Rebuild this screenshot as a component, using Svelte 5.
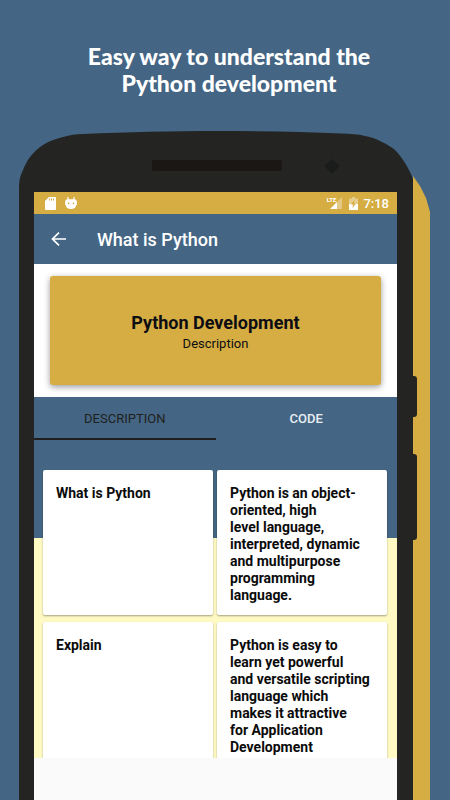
<script lang="ts">
	interface Lesson {
		id: number;
		title: string;
		body: string;
	}

	const tabs = ['Description', 'Code'];

	const lessons: Lesson[] = [
		{
			id: 1,
			title: 'What is Python',
			body: 'Python is an object-\noriented, high\nlevel language,\ninterpreted, dynamic\nand multipurpose\nprogramming\nlanguage.'
		},
		{
			id: 2,
			title: 'Explain',
			body: 'Python is easy to\nlearn yet powerful\nand versatile scripting\nlanguage which\nmakes it attractive\nfor Application\nDevelopment'
		}
	];

	let active = $state('Description');
</script>

<main class="page">
	<h1>Easy way to understand the<br />Python development</h1>

	<div class="phone">
		<div class="cast"></div>
		<span class="key key--power"></span>
		<span class="key key--volume"></span>

		<svg class="head" viewBox="0 0 394 61" preserveAspectRatio="none" aria-hidden="true">
			<path
				d="M0 61V56C0 50 1 45 4 39C6 34 8 30 11 26C15 21 19 17 24 14C30 10 37 8 44 6C51 4 57 3 64 3C110 1 150 0 200 0C245 0 285 1 323 2.5C331 3 339 3 346 5C352 6 358 8 363 11C368 13 372 16 376 19C380 23 383 27 386 32C389 37 392 42 394 48V61Z"
				fill="#242423"
			/>
			<rect x="133" y="29" width="130" height="11" rx="2" fill="#1b1714" />
			<path d="M313 28l8 7l-8 8l-8-8z" fill="#191c1a" />
		</svg>

		<div class="screen">
			<div class="status">
				<svg width="11" height="13" viewBox="0 0 11 13" aria-hidden="true">
					<path
						d="M4 0h6q1 0 1 1v11q0 1-1 1H1q-1 0-1-1V4zM4 1.4v2h1v-2zM6 1.4v2h1v-2zM8 1.4v2h1v-2z"
						fill="#fff"
						fill-rule="evenodd"
					/>
				</svg>
				<svg class="status__bot" width="12" height="13" viewBox="0 0 12 13" aria-hidden="true">
					<path d="M2.6 0L3.6 3M9.4 0L8.4 3" stroke="#fff" stroke-width="1.1" />
					<path d="M1 3.2q0-1 1-1h8q1 0 1 1v5q0 3.8-5 3.8T1 8.2z" fill="#fff" />
					<path d="M0.6 3.5v4.5M11.4 3.5v4.5" stroke="#fff" />
					<circle cx="3.6" cy="6.4" r="0.8" fill="#d5ad42" />
					<circle cx="8.4" cy="6.4" r="0.8" fill="#d5ad42" />
				</svg>
				<span class="status__signal">
					<span class="status__lte">LTE</span>
					<svg width="12" height="12" viewBox="0 0 12 12" aria-hidden="true">
						<path d="M12 0v12H7V5z" fill="#fff" opacity="0.35" />
						<path d="M7 5v7H0z" fill="#fff" />
					</svg>
				</span>
				<svg class="status__battery" width="9" height="13" viewBox="0 0 9 13" aria-hidden="true">
					<path d="M3 0h3v1.5h3V7H0V1.5h3z" fill="#fff" opacity="0.4" />
					<path d="M0 7h9v6H0z" fill="#fff" />
					<path d="M5.4 3L2 7.6h2L3.4 11L7 6.4H5z" fill="#d5ad42" />
				</svg>
				<time>7:18</time>
			</div>

			<header class="toolbar">
				<button type="button" aria-label="Back">
					<svg width="15" height="14" viewBox="0 0 15 14" aria-hidden="true">
						<path d="M15 7H1.5M8 0.7L1.5 7L8 13.3" fill="none" stroke="#fff" stroke-width="1.7" />
					</svg>
				</button>
				<h2>What is Python</h2>
			</header>

			<section class="hero">
				<div class="hero__card">
					<h3>Python Development</h3>
					<p>Description</p>
				</div>
			</section>

			<nav class="tabs" aria-label="Lesson sections">
				{#each tabs as tab (tab)}
					<button type="button" class:active={active === tab} onclick={() => (active = tab)}>
						{tab}
					</button>
				{/each}
			</nav>

			<section class="lessons">
				{#each lessons as lesson (lesson.id)}
					<h4 class="card">{lesson.title}</h4>
					<p class="card">{lesson.body}</p>
				{/each}
			</section>

			<div class="banner"></div>
		</div>
	</div>
</main>

<style>
	:global(body) {
		margin: 0;
	}

	.page {
		--blue: #446684;
		--gold: #d5ad42;
		--frame: #242423;
		display: flex;
		flex-direction: column;
		height: 100vh;
		overflow: hidden;
		background: var(--blue);
		font-family: Roboto, 'Liberation Sans', sans-serif;
	}

	h1,
	h2,
	h3,
	h4,
	p {
		margin: 0;
	}

	h1 {
		padding: 43px 0 34px 8px;
		color: #fff;
		font-family: Lato, 'Open Sans', sans-serif;
		font-size: 23px;
		font-weight: 900;
		line-height: 27px;
		text-align: center;
	}

	.phone {
		position: relative;
		isolation: isolate;
		display: flex;
		flex: 1;
		flex-direction: column;
		min-height: 0;
		margin: 0 37px 0 19px;
	}

	.cast {
		position: absolute;
		z-index: -1;
		top: 45px;
		right: -17px;
		bottom: 0;
		width: 17px;
		background: var(--gold);
		clip-path: polygon(0 0, 7px 10px, 13px 22px, 17px 36px, 17px 100%, 0 100%);
	}

	.key {
		position: absolute;
		right: -4px;
		width: 8px;
		background: var(--frame);
		border-radius: 3px;
	}

	.key--power {
		top: 245px;
		height: 41px;
	}

	.key--volume {
		top: 323px;
		height: 86px;
	}

	.head {
		display: block;
		width: 100%;
		height: 61px;
	}

	.screen {
		display: flex;
		flex: 1;
		flex-direction: column;
		min-height: 0;
		border: solid var(--frame);
		border-width: 0 16px 0 15px;
	}

	.status {
		display: flex;
		align-items: center;
		height: 22px;
		padding: 0 8px 0 11px;
		background: var(--gold);
		color: #fff;
	}

	.status__bot {
		margin-left: 9px;
	}

	.status__signal {
		position: relative;
		display: flex;
		margin-left: auto;
	}

	.status__lte {
		position: absolute;
		top: -1px;
		right: 6px;
		font-size: 6px;
		font-weight: 700;
		line-height: 7px;
	}

	.status__battery {
		margin: 0 5px 0 7px;
	}

	.status time {
		font-size: 13px;
		font-weight: 500;
	}

	.toolbar {
		display: flex;
		align-items: center;
		gap: 31px;
		height: 50px;
		padding-left: 17px;
		background: var(--blue);
		color: #fff;
	}

	.toolbar button {
		display: flex;
		padding: 0;
		border: 0;
		background: none;
	}

	.toolbar h2 {
		font-size: 18px;
		font-weight: 500;
	}

	.hero {
		padding: 12px 16px;
		background: #fff;
	}

	.hero__card {
		display: flex;
		flex-direction: column;
		align-items: center;
		justify-content: center;
		min-height: 109px;
		background: var(--gold);
		border-radius: 3px;
		box-shadow: 0 2px 6px rgb(0 0 0 / 0.4);
		color: #0d0e14;
	}

	.hero__card h3 {
		padding-top: 4px;
		font-size: 18px;
		font-weight: 700;
		line-height: 22px;
	}

	.hero__card p {
		font-size: 13px;
		line-height: 20px;
	}

	.tabs {
		display: flex;
		background: var(--blue);
	}

	.tabs button {
		flex: 1;
		height: 43px;
		padding: 2px 0 0;
		border: 0;
		border-bottom: 2px solid transparent;
		background: none;
		color: #e8eef3;
		font: 500 13px Roboto, sans-serif;
		text-transform: uppercase;
	}

	.tabs button.active {
		border-color: #1f1f1d;
		color: #1f1f1d;
		font-weight: 400;
	}

	.lessons {
		display: grid;
		flex: 1;
		grid-template-columns: 1fr 1fr;
		grid-auto-rows: max-content;
		gap: 7px 4px;
		min-height: 0;
		padding: 30px 10px 0 9px;
		overflow: hidden;
		background: linear-gradient(var(--blue) 98px, #fff9c4 98px);
	}

	.card {
		padding: 15px 13px 11px;
		background: #fff;
		border-radius: 2px;
		box-shadow: 0 1px 2px rgb(0 0 0 / 0.35);
		color: #0b0b0b;
		font-size: 14px;
		font-weight: 700;
		line-height: 17px;
		white-space: pre;
	}

	.banner {
		height: 42px;
		background: #fafafa;
	}
</style>
